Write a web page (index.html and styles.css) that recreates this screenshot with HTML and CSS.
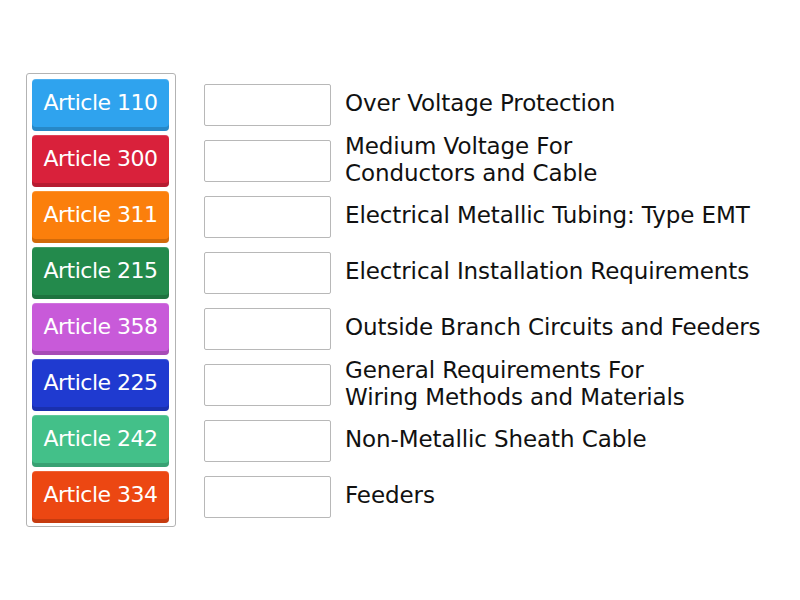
FILE: index.html
```html
<!DOCTYPE html>
<html>
<head>
<meta charset="utf-8">
<link rel="stylesheet" href="styles.css">
</head>
<body>
<div class="page">
  <div class="bank">
    <div class="tile c1">Article 110</div>
    <div class="tile c2">Article 300</div>
    <div class="tile c3">Article 311</div>
    <div class="tile c4">Article 215</div>
    <div class="tile c5">Article 358</div>
    <div class="tile c6">Article 225</div>
    <div class="tile c7">Article 242</div>
    <div class="tile c8">Article 334</div>
  </div>
  <div class="rows">
    <div class="row"><div class="slot"></div><div class="label">Over Voltage Protection</div></div>
    <div class="row"><div class="slot"></div><div class="label">Medium Voltage For<br>Conductors and Cable</div></div>
    <div class="row"><div class="slot"></div><div class="label">Electrical Metallic Tubing: Type EMT</div></div>
    <div class="row"><div class="slot"></div><div class="label">Electrical Installation Requirements</div></div>
    <div class="row"><div class="slot"></div><div class="label">Outside Branch Circuits and Feeders</div></div>
    <div class="row"><div class="slot"></div><div class="label">General Requirements For<br>Wiring Methods and Materials</div></div>
    <div class="row"><div class="slot"></div><div class="label">Non-Metallic Sheath Cable</div></div>
    <div class="row"><div class="slot"></div><div class="label">Feeders</div></div>
  </div>
</div>
</body>
</html>
```
FILE: styles.css
```css
html, body {
  margin: 0;
  padding: 0;
  background: #fff;
}
body {
  font-family: "DejaVu Sans", "Open Sans", sans-serif;
}
.page {
  display: flex;
  align-items: flex-start;
  padding: 73px 0 0 26px;
}
.bank {
  display: flex;
  flex-direction: column;
  gap: 4px;
  padding: 5px 6px 3px 5px;
  border: 1px solid #b3b3b3;
  border-radius: 3px;
}
.tile {
  width: 137px;
  height: 52px;
  box-sizing: border-box;
  border-radius: 4px;
  color: #fff;
  font-size: 22px;
  line-height: 48px;
  padding-bottom: 3px;
  text-align: center;
  white-space: nowrap;
  letter-spacing: -0.5px;
  box-shadow: inset 0 -4px 0 rgba(0,0,0,0.16), inset 0 1px 0 rgba(255,255,255,0.15);
}
.c1 { background: #2fa3ee; }
.c2 { background: #d9213b; }
.c3 { background: #fb7f0c; }
.c4 { background: #238a4c; }
.c5 { background: #c85ad9; }
.c6 { background: #1f3ad0; }
.c7 { background: #43c089; }
.c8 { background: #ec4712; }
.rows {
  display: flex;
  flex-direction: column;
  gap: 4px;
  margin-top: 6px;
  margin-left: 28px;
}
.row {
  height: 52px;
  display: flex;
  align-items: center;
  gap: 14px;
}
.slot {
  width: 127px;
  height: 42px;
  box-sizing: border-box;
  border: 1px solid #b8b8b8;
  border-radius: 2px;
  background: #fff;
  flex: none;
}
.label {
  color: #111;
  font-size: 23px;
  line-height: 27px;
  padding-bottom: 3px;
  white-space: nowrap;
  letter-spacing: -0.1px;
}
```
